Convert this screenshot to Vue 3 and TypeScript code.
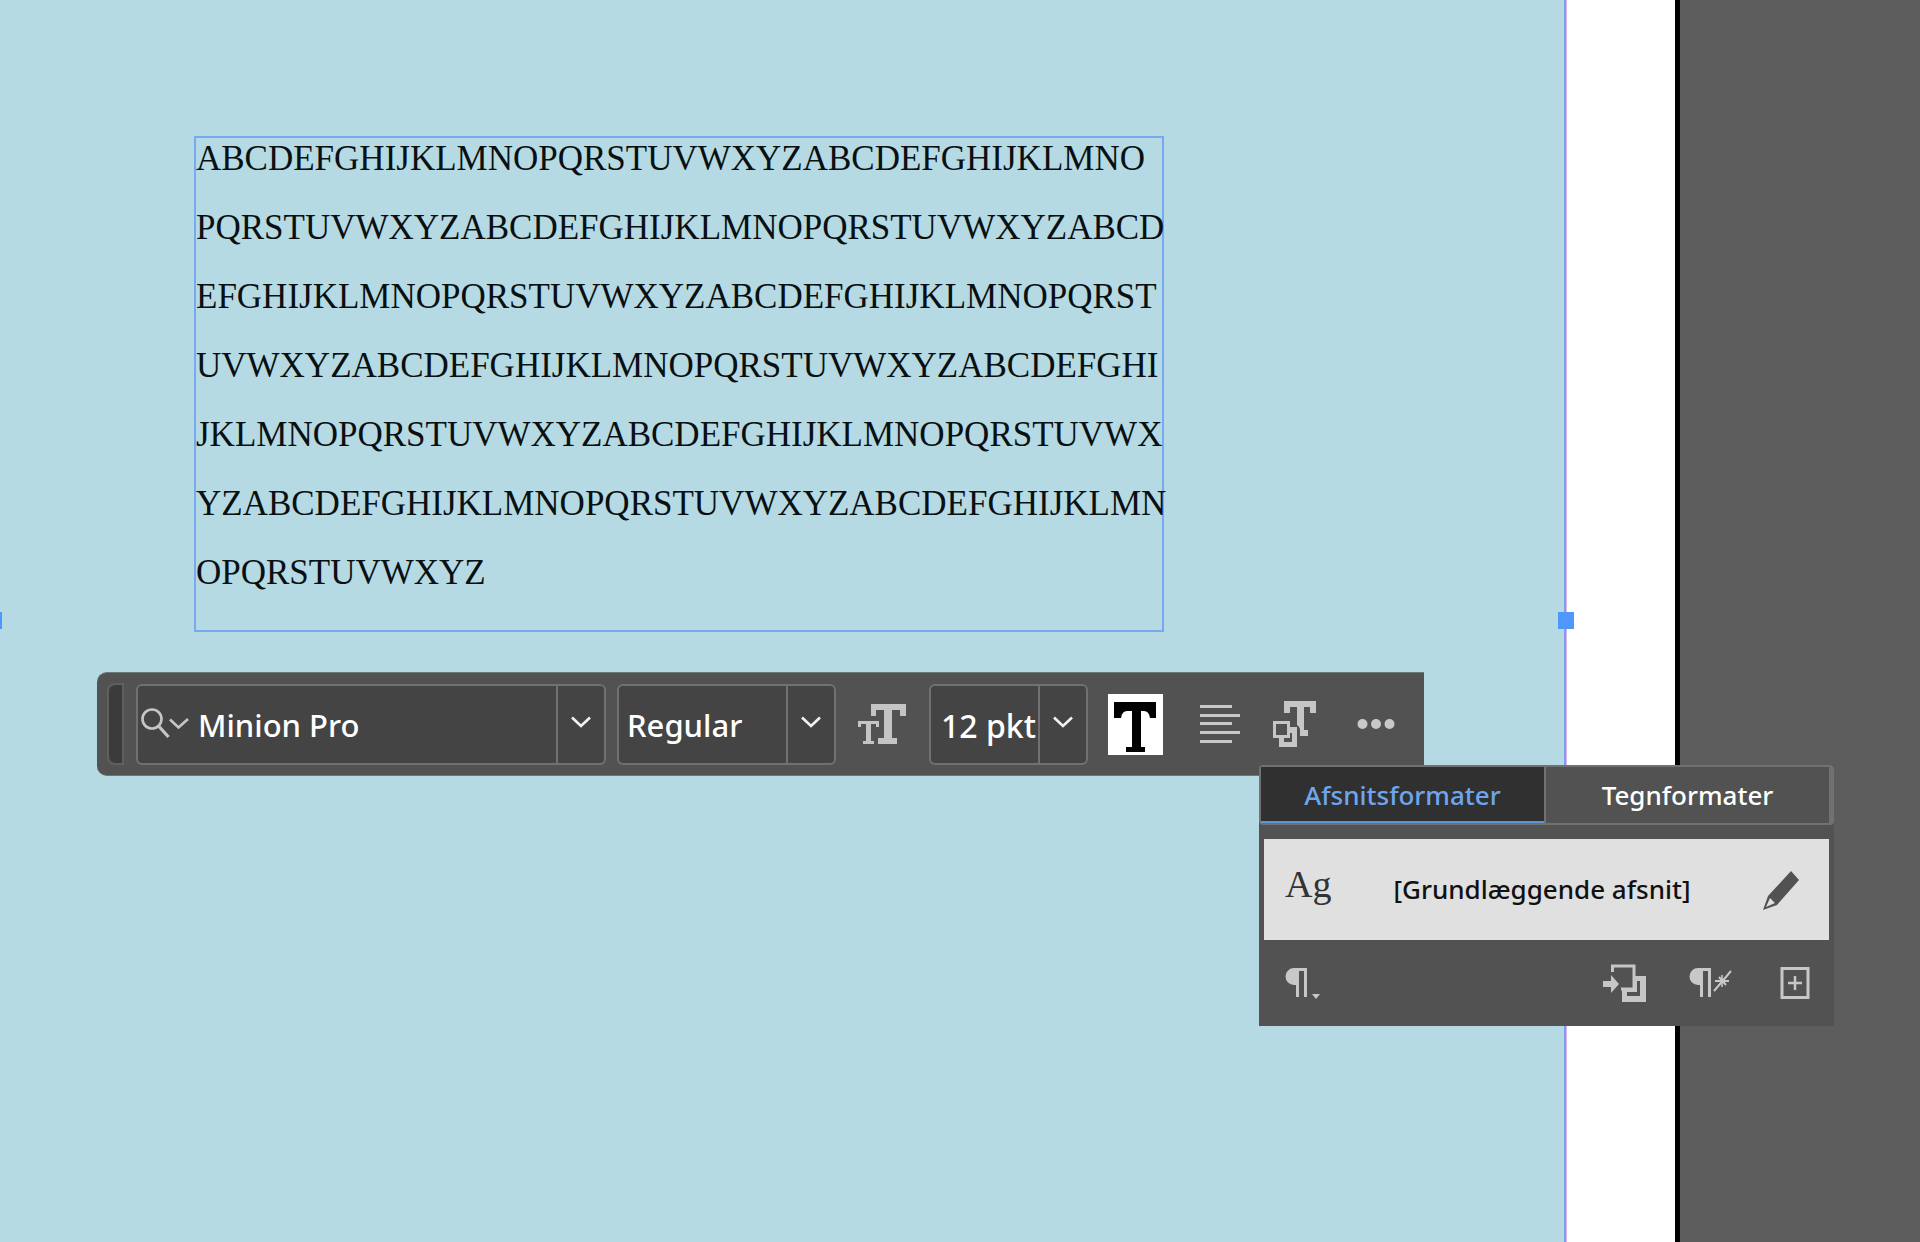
<script setup lang="ts">
import { ref } from 'vue'

const storyLines: string[] = [
  'ABCDEFGHIJKLMNOPQRSTUVWXYZABCDEFGHIJKLMNO',
  'PQRSTUVWXYZABCDEFGHIJKLMNOPQRSTUVWXYZABCD',
  'EFGHIJKLMNOPQRSTUVWXYZABCDEFGHIJKLMNOPQRST',
  'UVWXYZABCDEFGHIJKLMNOPQRSTUVWXYZABCDEFGHI',
  'JKLMNOPQRSTUVWXYZABCDEFGHIJKLMNOPQRSTUVWX',
  'YZABCDEFGHIJKLMNOPQRSTUVWXYZABCDEFGHIJKLMN',
  'OPQRSTUVWXYZ',
]

type Tab = 'paragraph' | 'character'

const fontFamily = ref('Minion Pro')
const fontStyle = ref('Regular')
const fontSize = ref('12 pkt')
const activeTab = ref<Tab>('paragraph')
const tabs: { id: Tab; label: string }[] = [
  { id: 'paragraph', label: 'Afsnitsformater' },
  { id: 'character', label: 'Tegnformater' },
]
</script>

<template>
  <main class="workspace">
    <div class="page">
      <i class="handle handle-left"></i>
      <i class="handle handle-right"></i>
    </div>
    <div class="paper"></div>
    <div class="pasteboard"></div>

    <p class="text-frame">
      <span v-for="(line, i) in storyLines" :key="i" class="line">{{ line }}</span>
    </p>

    <div class="toolbar" role="toolbar" aria-label="Tekst">
      <div class="grip"></div>

      <div class="combo combo-family">
        <svg class="search" width="50" height="34" viewBox="0 0 50 34" fill="none" stroke="#c6c6c6" aria-hidden="true">
          <circle cx="12" cy="12" r="9.5" stroke-width="2.6" />
          <path d="M19 19.5 28.5 30" stroke-width="3.2" />
          <path d="M30 12.5 38.5 20.5 48 12" stroke-width="2.6" />
        </svg>
        <input v-model="fontFamily" type="text" aria-label="Skrifttype" />
        <button type="button" aria-label="Vælg skrifttype">
          <svg width="22" height="14" viewBox="0 0 22 14"><path d="M2 2.5 11 11 20 2.5" /></svg>
        </button>
      </div>

      <div class="combo combo-style">
        <select v-model="fontStyle" aria-label="Typografi">
          <option>Regular</option>
        </select>
        <span class="select-arrow">
          <svg width="22" height="14" viewBox="0 0 22 14"><path d="M2 2.5 11 11 20 2.5" /></svg>
        </span>
      </div>

      <svg class="size-icon" width="48" height="42" viewBox="0 0 48 42" fill="#c4c4c4" aria-hidden="true">
        <path d="M13 1H48V13H42V7H34V35H39V41H20V35H26V7H18V13H13Z" />
        <path d="M0 18H21V24H18V21H13V38H16V41H5V38H8V21H3V24H0Z" />
      </svg>

      <div class="combo combo-size">
        <input v-model="fontSize" type="text" aria-label="Skriftstørrelse" />
        <button type="button" aria-label="Vælg størrelse">
          <svg width="22" height="14" viewBox="0 0 22 14"><path d="M2 2.5 11 11 20 2.5" /></svg>
        </button>
      </div>

      <button class="tool fill" type="button" aria-label="Tekstfarve">
        <svg width="55" height="61" viewBox="0 0 55 61">
          <path d="M6 8H48V24H42Q41 17 36 17H33V53H37V58H18V53H24V17H19Q14 17 13 24H6Z" />
        </svg>
      </button>

      <button class="tool align" type="button" aria-label="Justering">
        <svg width="40" height="40" viewBox="0 0 40 40" fill="#c8c8c8">
          <path d="M0 1H32V4H0ZM0 10H40V13H0ZM0 18H32V21H0ZM0 27H40V30H0ZM0 36H32V39H0Z" />
        </svg>
      </button>

      <button class="tool styles" type="button" aria-label="Formater">
        <svg width="44" height="48" viewBox="0 0 44 48" fill="#c6c6c6">
          <path d="M11 1H43V13H37V7H31V30H35V36H27V29Q26 26 24 25V7H17V13H11Z" />
          <path fill-rule="evenodd" d="M0 21H17V38H0ZM3 24V35H14V24Z" />
          <path fill-rule="evenodd" d="M17 27H24V47H6V38H17ZM17 33V38H11V42H19V33Z" />
        </svg>
      </button>

      <button class="tool more" type="button" aria-label="Flere indstillinger">
        <svg width="38" height="12" viewBox="0 0 38 12" fill="#c8c8c8">
          <circle cx="5.5" cy="6" r="5" /><circle cx="19" cy="6" r="5" /><circle cx="32.5" cy="6" r="5" />
        </svg>
      </button>
    </div>

    <section class="panel" aria-label="Formater">
      <div class="tabs" role="tablist">
        <button
          v-for="tab in tabs"
          :key="tab.id"
          type="button"
          role="tab"
          :aria-selected="activeTab === tab.id"
          :class="['tab', { active: activeTab === tab.id }]"
          @click="activeTab = tab.id"
        >{{ tab.label }}</button>
      </div>

      <div class="style-row">
        <span class="sample">Ag</span>
        <span class="style-name">[Grundlæggende afsnit]</span>
        <button class="tool" type="button" aria-label="Rediger format">
          <svg width="38" height="42" viewBox="0 0 38 42" fill="#525252">
            <path fill-rule="evenodd" d="M28 2 36 11 14 36 0 41 5 27ZM7 29 3 38 12 34Z" />
          </svg>
        </button>
      </div>

      <div class="actions">
        <button class="tool" type="button" aria-label="Afsnitsmenu">
          <svg width="36" height="32" viewBox="0 0 36 32" fill="#c8c8c8">
            <path d="M9 1H22V30H19V4H14V30H11V18H9A8.5 8.5 0 0 1 9 1Z" />
            <path d="M27 27H35L31 32Z" />
          </svg>
        </button>
        <button class="tool redefine" type="button" aria-label="Omdefiner format">
          <svg width="44" height="40" viewBox="0 0 44 40" fill="#c6c6c6">
            <path d="M0 18H8V12L16 21 8 30V24H0Z" />
            <path d="M32 13H43V39H19V27H31V24H32Z" />
            <path d="M34 18H37V33H24V29H34Z" fill="#525252" />
            <path d="M9.5 9V3H31V26H18" fill="none" stroke="#c6c6c6" stroke-width="3" />
          </svg>
        </button>
        <button class="tool clear" type="button" aria-label="Ryd tilsidesættelser">
          <svg width="44" height="32" viewBox="0 0 44 32" fill="#c8c8c8">
            <path d="M9 1H22V30H19V4H14V30H11V18H9A8.5 8.5 0 0 1 9 1Z" />
            <path d="M25 24 42 4M26 14H40M30 10 37 18" fill="none" stroke="#c8c8c8" stroke-width="2" />
            <path d="M33 8V20" fill="none" stroke="#c8c8c8" stroke-width="1.5" />
          </svg>
        </button>
        <button class="tool" type="button" aria-label="Nyt format">
          <svg width="30" height="32" viewBox="0 0 30 32" fill="none" stroke="#c8c8c8">
            <rect x="2" y="1.5" width="26" height="29" stroke-width="3" />
            <path d="M15 9V23M8 16H22" stroke-width="2.5" />
          </svg>
        </button>
      </div>
    </section>
  </main>
</template>

<style>
body {
  margin: 0;
}
</style>

<style scoped>
.workspace {
  position: relative;
  display: flex;
  min-height: 100vh;
  overflow: hidden;
  background: #5d5d5d;
  font-family: 'Noto Sans', 'Open Sans', sans-serif;
  font-weight: 500;
  color: #fff;
}
.page {
  position: relative;
  flex: 1;
  background: #b5dae3;
  border-right: 2px solid #7f9cf0;
}
.paper {
  width: 108px;
  background: #fff;
  border-left: 1px solid #dcb6ea;
  border-right: 5px solid #000;
}
.pasteboard {
  width: 240px;
}
.handle {
  position: absolute;
  top: 50%;
  width: 16px;
  height: 17px;
  margin-top: -9px;
  background: #4f97fb;
}
.handle-left {
  left: -14px;
}
.handle-right {
  right: -10px;
}

.text-frame {
  position: absolute;
  left: 194px;
  top: 136px;
  box-sizing: border-box;
  width: 970px;
  margin: 0;
  padding-bottom: 9px;
  border: 2px solid #78a8ee;
  font: 35px/42px 'Liberation Serif', 'Times New Roman', serif;
  color: #0a1012;
}
.line {
  display: block;
  height: 69px;
  white-space: nowrap;
}

.toolbar {
  position: absolute;
  left: 97px;
  top: 672px;
  box-sizing: border-box;
  display: flex;
  align-items: center;
  width: 1327px;
  height: 104px;
  padding-left: 10px;
  background: #525252;
  border-top: 1px solid #6a7678;
  border-bottom: 1px solid #6a7678;
  border-radius: 10px 0 0 10px;
}
.grip {
  box-sizing: border-box;
  width: 17px;
  height: 82px;
  margin-right: 12px;
  background: #3b3b3b;
  border: 2px solid #5f5f5f;
  border-radius: 8px 0 0 8px;
}
.combo {
  box-sizing: border-box;
  display: flex;
  height: 81px;
  background: #444;
  border: 2px solid #717171;
  border-radius: 6px;
}
.combo-family {
  width: 470px;
}
.combo-style {
  width: 219px;
  margin-left: 11px;
}
.combo-size {
  width: 159px;
  margin-left: 23px;
}
.search {
  flex: none;
  margin: 21px 0 0 2px;
}
input,
select {
  flex: 1;
  min-width: 0;
  padding: 2px 0 0 8px;
  border: 0;
  outline: 0;
  background: none;
  appearance: none;
  font: inherit;
  font-size: 31px;
  color: #fff;
}
.combo-size input {
  padding-left: 10px;
  font-size: 32px;
}
.combo button,
.select-arrow {
  box-sizing: border-box;
  display: flex;
  align-items: center;
  justify-content: center;
  width: 48px;
  padding: 0 0 4px;
  border: 0;
  border-left: 2px solid #717171;
  background: none;
}
.select-arrow {
  pointer-events: none;
}
.combo button path,
.select-arrow path {
  fill: none;
  stroke: #f2f2f2;
  stroke-width: 2.6;
}
.size-icon {
  margin-left: 22px;
}
.tool {
  flex: none;
  display: flex;
  padding: 0;
  border: 0;
  background: none;
}
.fill {
  margin-left: 20px;
  background: #fff;
}
.align {
  margin-left: 37px;
}
.styles {
  margin-left: 33px;
}
.more {
  margin-left: 40px;
}

.panel {
  position: absolute;
  left: 1259px;
  top: 765px;
  box-sizing: border-box;
  width: 575px;
  background: #525252;
}
.tabs {
  box-sizing: border-box;
  display: flex;
  height: 60px;
  border: 2px solid #717171;
  border-right-width: 5px;
  border-radius: 4px;
}
.tab {
  flex: 1;
  padding: 0;
  border: 0;
  background: none;
  font: inherit;
  font-size: 26px;
  color: #fff;
}
.tab.active {
  background: #303030;
  border-right: 2px solid #717171;
  box-shadow: inset 0 -2px #5a94dc;
  color: #6ea6ee;
}
.style-row {
  box-sizing: border-box;
  display: flex;
  align-items: center;
  height: 101px;
  margin: 14px 5px 0;
  padding: 0 28px 0 21px;
  background: #e0e0e0;
  color: #111;
}
.sample {
  width: 36px;
  padding-bottom: 12px;
  font: 38px/48px 'Liberation Serif', serif;
  color: #333;
}
.style-name {
  flex: 1;
  padding-bottom: 2px;
  text-align: center;
  font-size: 26px;
}
.actions {
  display: flex;
  align-items: center;
  height: 86px;
  padding: 0 24px 0 26px;
}
.redefine {
  margin-left: auto;
}
.clear {
  margin: 0 47px 0 42px;
}
</style>
